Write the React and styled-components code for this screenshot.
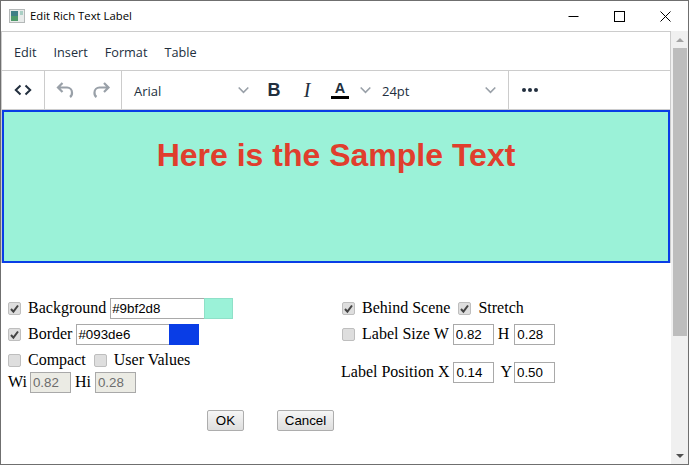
import styled, { createGlobalStyle } from 'styled-components';

const GlobalStyle = createGlobalStyle`
	html, body {
		margin: 0;
		padding: 0;
		background: #fff;
	}
`;

export default function App() {
	return (
		<>
			<GlobalStyle />
			<Window>
				<TitleBar>
					<AppIcon viewBox="0 0 16 14">
						<rect x="0.5" y="0.5" width="15" height="13" fill="#e8ebea" stroke="#b4b8b8" />
						<rect x="2" y="2" width="7" height="10" fill="#3f7f86" />
						<rect x="2" y="7" width="7" height="5" fill="#4f9a6a" />
						<rect x="11" y="2" width="3" height="4" fill="#a9cfc4" />
					</AppIcon>
					<WindowTitle>Edit Rich Text Label</WindowTitle>
					<WindowButton>
						<svg width="11" height="11" viewBox="0 0 11 11">
							<path d="M0.5 5.5H10.5" stroke="#000" fill="none" />
						</svg>
					</WindowButton>
					<WindowButton>
						<svg width="11" height="11" viewBox="0 0 11 11">
							<rect x="0.5" y="0.5" width="10" height="10" stroke="#000" fill="none" />
						</svg>
					</WindowButton>
					<WindowButton>
						<svg width="11" height="11" viewBox="0 0 11 11">
							<path d="M0.5 0.5L10.5 10.5M10.5 0.5L0.5 10.5" stroke="#000" fill="none" />
						</svg>
					</WindowButton>
				</TitleBar>
				<Body>
					<Content>
						<EditorFrame>
							<MenuBar>
								<MenuItem>Edit</MenuItem>
								<MenuItem>Insert</MenuItem>
								<MenuItem>Format</MenuItem>
								<MenuItem>Table</MenuItem>
							</MenuBar>
							<ToolBar>
								<ToolGroup $width={43}>
									<IconSlot $width={20}>
										<svg width="20" height="20" viewBox="0 0 20 20">
											<path d="M7.5 5.5L2.8 10l4.7 4.5M12.5 5.5l4.7 4.5-4.7 4.5" stroke="#222f3e" strokeWidth="2" fill="none" />
										</svg>
									</IconSlot>
								</ToolGroup>
								<ToolGroup $width={77}>
									<IconSlot $width={24}>
										<svg width="24" height="24" viewBox="0 0 24 24">
											<path d="M8.5 5L4 9.5 8.5 14M4.5 9.5H13a5 5 0 0 1 5 5v0a5 5 0 0 1-2 4.5" stroke="#99a0a8" strokeWidth="2.2" fill="none" />
										</svg>
									</IconSlot>
									<IconSlot $width={24}>
										<svg width="24" height="24" viewBox="0 0 24 24">
											<path d="M15 5l4.5 4.5L15 14M19 9.5h-8.5a5 5 0 0 0-5 5v0a5 5 0 0 0 2 4.5" stroke="#99a0a8" strokeWidth="2.2" fill="none" />
										</svg>
									</IconSlot>
								</ToolGroup>
								<FormatGroup>
									<FontSelect>
										<SelectText>Arial</SelectText>
										<Chevron />
									</FontSelect>
									<BoldButton>B</BoldButton>
									<ItalicButton>I</ItalicButton>
									<ColorButton>
										<ColorLetter>A</ColorLetter>
										<ColorBar />
									</ColorButton>
									<ColorChevron>
										<Chevron />
									</ColorChevron>
									<SizeSelect>
										<SelectText>24pt</SelectText>
										<Chevron />
									</SizeSelect>
								</FormatGroup>
								<MoreGroup>
									<svg width="16" height="6" viewBox="0 0 16 6">
										<circle cx="2" cy="3" r="2" fill="#222f3e" />
										<circle cx="8" cy="3" r="2" fill="#222f3e" />
										<circle cx="14" cy="3" r="2" fill="#222f3e" />
									</svg>
								</MoreGroup>
							</ToolBar>
							<EditArea>
								<SampleText>Here is the Sample Text</SampleText>
							</EditArea>
						</EditorFrame>
						<Form>
							<FormColumn>
								<FormRow $height={26}>
									<Check checked label="Background" />
									<TextField $width={94} defaultValue="#9bf2d8" />
									<Swatch $color="#9bf2d8" $width={29} $border="#8fe0c8" />
								</FormRow>
								<FormRow $height={26}>
									<Check checked label="Border" />
									<TextField $width={93} defaultValue="#093de6" />
									<Swatch $color="#093de6" $width={30} $border="#093de6" />
								</FormRow>
								<FormRow $height={26} $gap={8}>
									<Check label="Compact" />
									<Check label="User Values" />
								</FormRow>
								<FormRow $height={18} $gap={3}>
									<FieldLabel>Wi</FieldLabel>
									<NumberField disabled defaultValue="0.82" />
									<FieldLabel $left={1} $right={1}>Hi</FieldLabel>
									<NumberField disabled defaultValue="0.28" />
								</FormRow>
							</FormColumn>
							<FormColumn>
								<FormRow $height={26} $gap={8} $indent={1}>
									<Check checked label="Behind Scene" />
									<Check checked label="Stretch" />
								</FormRow>
								<FormRow $height={26} $indent={1}>
									<Check label="Label Size W" />
									<NumberField defaultValue="0.82" />
									<FieldLabel $right={1}>H</FieldLabel>
									<NumberField defaultValue="0.28" />
								</FormRow>
								<FormRow $height={26} $top={12} $gap={4}>
									<FieldLabel>Label Position X</FieldLabel>
									<NumberField defaultValue="0.14" />
									<FieldLabel $left={2} $right={-2}>Y</FieldLabel>
									<NumberField defaultValue="0.50" />
								</FormRow>
							</FormColumn>
						</Form>
						<Actions>
							<ActionButton $width={37}>OK</ActionButton>
							<ActionButton $width={57}>Cancel</ActionButton>
						</Actions>
					</Content>
					<ScrollBar>
						<ScrollArrow $up />
						<ScrollThumb />
						<ScrollTrack />
						<ScrollArrow />
					</ScrollBar>
				</Body>
			</Window>
		</>
	);
}

function Chevron() {
	return (
		<svg width="11" height="8" viewBox="0 0 11 8">
			<path d="M0.7 1.5l4.8 4.8 4.8-4.8" stroke="#99a0a8" strokeWidth="1.6" fill="none" />
		</svg>
	);
}

function Check({ checked, label }) {
	return (
		<CheckLabel>
			<CheckBox>
				{checked && (
					<svg width="11" height="11" viewBox="0 0 11 11">
						<path d="M2 6l2.4 2.6L9 2.5" stroke="#444" strokeWidth="2" fill="none" />
					</svg>
				)}
			</CheckBox>
			{label}
		</CheckLabel>
	);
}

const Window = styled.div`
	box-sizing: border-box;
	width: 689px;
	height: 465px;
	border: 1px solid #6f6f6f;
	display: flex;
	flex-direction: column;
	background: #fff;
	overflow: hidden;
	font-family: 'Liberation Serif', serif;
	font-size: 16px;
	color: #000;
`;
const TitleBar = styled.div`
	height: 30px;
	flex: none;
	display: flex;
	align-items: center;
	padding-left: 8px;
`;
const AppIcon = styled.svg`
	width: 16px;
	height: 14px;
	margin-right: 5px;
`;
const WindowTitle = styled.div`
	flex: 1;
	padding-bottom: 1px;
	font-family: 'Open Sans', sans-serif;
	font-size: 11.3px;
`;
const WindowButton = styled.div`
	width: 46px;
	height: 30px;
	display: flex;
	align-items: center;
	justify-content: center;
`;
const Body = styled.div`
	flex: 1;
	min-height: 0;
	display: flex;
`;
const Content = styled.div`
	flex: 1;
	min-width: 0;
`;
const EditorFrame = styled.div`
	border-top: 1px solid #ccc;
	border-left: 1px solid #ccc;
	border-right: 1px solid #ccc;
	box-sizing: border-box;
`;
const MenuBar = styled.div`
	height: 39px;
	box-sizing: border-box;
	display: flex;
	align-items: center;
	gap: 17px;
	padding: 1px 0 0 12px;
	border-bottom: 1px solid #ccc;
`;
const MenuItem = styled.span`
	font-family: 'Open Sans', sans-serif;
	font-size: 12.7px;
	color: #222f3e;
`;
const ToolBar = styled.div`
	height: 39px;
	box-sizing: border-box;
	display: flex;
	border-bottom: 1px solid #ccc;
`;
const ToolGroup = styled.div`
	width: ${({ $width }) => $width}px;
	flex: none;
	box-sizing: border-box;
	display: flex;
	align-items: center;
	justify-content: center;
	gap: 11px;
	border-right: 1px solid #ccc;
`;
const IconSlot = styled.div`
	width: ${({ $width }) => $width}px;
	height: 24px;
	display: flex;
	align-items: center;
	justify-content: center;
`;
const FormatGroup = styled.div`
	width: 387px;
	flex: none;
	box-sizing: border-box;
	display: flex;
	align-items: center;
	padding-left: 12px;
	border-right: 1px solid #ccc;
`;
const MoreGroup = styled.div`
	flex: 1;
	display: flex;
	align-items: center;
	padding-left: 13px;
`;
const SelectText = styled.span`
	padding-top: 1px;
	font-family: 'Open Sans', sans-serif;
	font-size: 13px;
	color: #222f3e;
`;
const FontSelect = styled.div`
	width: 115px;
	flex: none;
	display: flex;
	align-items: center;
	justify-content: space-between;
`;
const BoldButton = styled.div`
	width: 24px;
	margin-left: 13px;
	text-align: center;
	font-family: 'Liberation Sans', sans-serif;
	font-weight: 700;
	font-size: 18px;
	color: #222f3e;
`;
const ItalicButton = styled.div`
	width: 24px;
	margin-left: 9px;
	text-align: center;
	font-family: 'Liberation Serif', serif;
	font-style: italic;
	font-size: 20px;
	color: #222f3e;
`;
const ColorButton = styled.div`
	width: 18px;
	margin-left: 12px;
	display: flex;
	flex-direction: column;
	align-items: center;
`;
const ColorLetter = styled.span`
	font-family: 'Liberation Sans', sans-serif;
	font-weight: 700;
	font-size: 14.5px;
	line-height: 15px;
	color: #222f3e;
`;
const ColorBar = styled.div`
	width: 18px;
	height: 3px;
	background: #000;
`;
const ColorChevron = styled.div`
	margin-left: 11px;
	display: flex;
`;
const SizeSelect = styled.div`
	width: 114px;
	margin-left: 11px;
	flex: none;
	display: flex;
	align-items: center;
	justify-content: space-between;
`;
const EditArea = styled.div`
	height: 153px;
	box-sizing: border-box;
	border: 2px solid #093de6;
	background: #9bf2d8;
	display: flex;
	justify-content: center;
`;
const SampleText = styled.p`
	margin: 25px 0 0;
	font-family: 'Liberation Sans', sans-serif;
	font-weight: 700;
	font-size: 32px;
	line-height: 37px;
	color: #e03e2d;
`;
const Form = styled.div`
	display: grid;
	grid-template-columns: 333px 1fr;
	padding: 32px 0 0 7px;
`;
const FormColumn = styled.div`
	display: flex;
	flex-direction: column;
`;
const FormRow = styled.div`
	height: ${({ $height }) => $height}px;
	margin-top: ${({ $top }) => $top || 0}px;
	padding-left: ${({ $indent }) => $indent || 0}px;
	display: flex;
	align-items: center;
	gap: ${({ $gap }) => $gap ?? 4}px;
	white-space: nowrap;
`;
const FieldLabel = styled.span`
	margin-left: ${({ $left }) => $left || 0}px;
	margin-right: ${({ $right }) => $right || 0}px;
`;
const CheckLabel = styled.label`
	display: inline-flex;
	align-items: center;
	gap: 7px;
`;
const CheckBox = styled.span`
	width: 13px;
	height: 13px;
	box-sizing: border-box;
	display: inline-flex;
	align-items: center;
	justify-content: center;
	border: 1px solid #bebebe;
	border-radius: 2px;
	background: #dedede;
`;
const TextField = styled.input`
	width: ${({ $width }) => $width}px;
	height: 21px;
	box-sizing: border-box;
	margin: 0;
	padding: 0 1px;
	border: 1px solid #a9a9a9;
	border-right: none;
	outline: none;
	font-family: 'Liberation Sans', sans-serif;
	font-size: 13.33px;
	color: #000;
`;
const NumberField = styled.input`
	width: 41px;
	height: 21px;
	box-sizing: border-box;
	margin: 0;
	padding: 0 2px;
	border: 1px solid #a9a9a9;
	outline: none;
	font-family: 'Liberation Sans', sans-serif;
	font-size: 13.33px;
	color: #000;
	&:disabled {
		background: #ebebe4;
		color: #6d6d6d;
	}
`;
const Swatch = styled.div`
	width: ${({ $width }) => $width}px;
	height: 21px;
	box-sizing: border-box;
	margin-left: -4px;
	background: ${({ $color }) => $color};
	border: 1px solid ${({ $border }) => $border};
`;
const Actions = styled.div`
	display: flex;
	gap: 33px;
	padding: 19px 0 0 206px;
`;
const ActionButton = styled.button`
	width: ${({ $width }) => $width}px;
	height: 21px;
	box-sizing: border-box;
	margin: 0;
	padding: 0;
	border: 1px solid #adadad;
	border-radius: 2px;
	background: linear-gradient(#f6f6f6, #dedede);
	font-family: 'Liberation Sans', sans-serif;
	font-size: 13.33px;
	color: #000;
`;
const ScrollBar = styled.div`
	width: 17px;
	flex: none;
	display: flex;
	flex-direction: column;
	align-items: center;
	background: #f0f0f0;
`;
const ScrollArrow = styled.div`
	height: 17px;
	width: 17px;
	flex: none;
	display: flex;
	align-items: center;
	justify-content: center;
	&::before {
		content: '';
		border-left: 4px solid transparent;
		border-right: 4px solid transparent;
		${({ $up }) => ($up ? 'border-bottom: 4px solid #a3a3a3;' : 'border-top: 4px solid #505050;')}
	}
`;
const ScrollThumb = styled.div`
	width: 14px;
	height: 288px;
	flex: none;
	background: #bdbdbd;
`;
const ScrollTrack = styled.div`
	flex: 1;
`;
